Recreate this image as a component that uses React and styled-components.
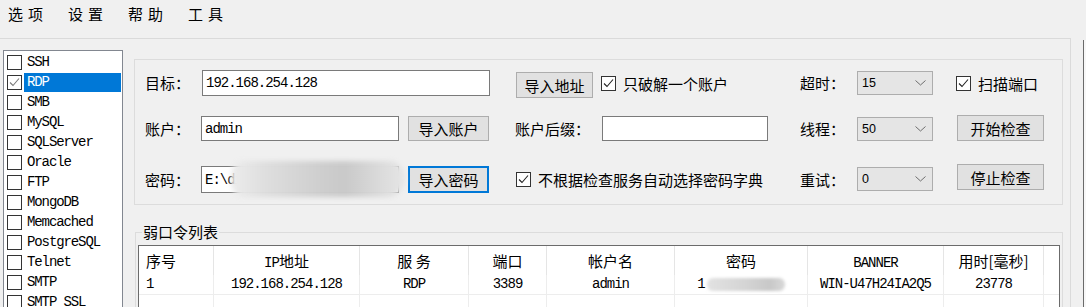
import React from 'react';
import styled, { createGlobalStyle, css } from 'styled-components';

const cjk = `"Noto Sans CJK SC", "Microsoft YaHei", sans-serif`;
const mono = `"Liberation Mono", "Noto Sans CJK SC", monospace`;

const Global = createGlobalStyle`
  html, body { margin: 0; padding: 0; background: #f0f0f0; }
  body { font-family: ${cjk}; font-size: 15px; color: #000; }
  * { box-sizing: border-box; }
`;

const Window = styled.div`
  width: 1086px;
  height: 307px;
  overflow: hidden;
  background: #f0f0f0;
  display: flex;
  flex-direction: column;
`;

const MenuBar = styled.div`
  display: flex;
  height: 30px;
  padding-left: 8px;
  flex: none;
`;

const MenuItem = styled.div`
  width: 60px;
  height: 28px;
  line-height: 28px;
  font-size: 15px;
  letter-spacing: 5px;
`;

const Body = styled.div`
  display: flex;
  margin-top: 8px;
  flex: 1;
  min-height: 0;
`;

const Panel = styled.div`
  width: 1071px;
  flex: none;
  border-top: 1px solid #dadada;
  border-right: 1px solid #dadada;
  display: flex;
  align-items: flex-start;
  padding: 11px 0 0 3px;
`;

const EdgeLine = styled.div`
  width: 1px;
  margin-left: 12px;
  margin-top: 2px;
  background: #6a6a6a;
  flex: none;
`;

const EdgeStrip = styled.div`
  flex: 1;
  margin-top: 2px;
  background: #f7f7f7;
`;

/* ---------- service list ---------- */
const ListBox = styled.div`
  width: 120px;
  height: 280px;
  flex: none;
  background: #fff;
  border: 1px solid #828790;
  padding-top: 1px;
`;

const ListItem = styled.div`
  height: 20px;
  display: flex;
  align-items: center;
`;

const ListLabel = styled.div`
  flex: 1;
  height: 19px;
  align-self: flex-end;
  margin: 0 1px 0 2px;
  padding-left: 3px;
  font-family: ${mono};
  font-size: 14px;
  letter-spacing: -1.1px;
  line-height: 18px;
  white-space: nowrap;
  background: ${p => (p.$selected ? '#0078d7' : 'transparent')};
  color: ${p => (p.$selected ? '#fff' : '#000')};
`;

const Box = styled.span`
  width: 15px;
  height: 15px;
  flex: none;
  border: 1px solid #333;
  background: #fff;
  display: inline-flex;
  align-items: center;
  justify-content: center;
  margin-left: ${p => p.$ml || 0}px;
`;

const Check = ({ checked, color = '#222', ml }) => (
  <Box $ml={ml}>
    {checked && (
      <svg width="13" height="13" viewBox="0 0 13 13">
        <polyline points="2,6.5 5,9.5 11,2.5" fill="none" stroke={color} strokeWidth="1.1" />
      </svg>
    )}
  </Box>
);

/* ---------- right column ---------- */
const RightCol = styled.div`
  width: 929px;
  margin-left: 11px;
  margin-top: 9px;
  flex: none;
  display: flex;
  flex-direction: column;
`;

const GroupBox = styled.div`
  border: 1px solid #dcdcdc;
  padding: 10px 0 11px 10px;
`;

const FormGrid = styled.div`
  display: grid;
  grid-template-columns: 56px 198px 9px 82px 25px 87px 166px 32px 57px 76px 23px 88px;
  grid-template-rows: 26px 20px 25px 25px 27px;
  align-items: center;
`;

const place = css`
  grid-column: ${p => p.$col};
  grid-row: ${p => p.$row};
`;

const Label = styled.div`
  ${place};
  font-size: 15px;
  line-height: 20px;
  white-space: nowrap;
  justify-self: start;
`;

const TextBox = styled.div`
  ${place};
  position: relative;
  align-self: stretch;
  margin-left: ${p => p.$ml || 0}px;
  background: #fff;
  border: 1px solid #7a7a7a;
  padding-left: 3px;
  display: flex;
  align-items: center;
  font-family: ${mono};
  font-size: 14px;
  letter-spacing: -1px;
  white-space: nowrap;
  overflow: visible;
`;

const Smear = styled.div`
  position: absolute;
  left: 29px;
  top: -6px;
  width: 174px;
  height: 36px;
  border-radius: 14px 16px 18px 14px;
  background: linear-gradient(90deg, #ececec 0%, #dedede 20%, #cfcfcf 50%, #c9c9c9 65%, #dadada 85%, #e6e6e6 100%);
  filter: blur(2.5px);
`;

const Button = styled.div`
  ${place};
  align-self: start;
  justify-self: start;
  width: ${p => p.$w}px;
  height: ${p => p.$h}px;
  margin-top: ${p => p.$mt || 0}px;
  margin-left: ${p => p.$ml || 0}px;
  background: #e1e1e1;
  border: 1px solid ${p => (p.$focus ? '#0078d7' : '#adadad')};
  box-shadow: ${p => (p.$focus ? 'inset 0 0 0 1px #0078d7' : 'none')};
  display: flex;
  align-items: center;
  justify-content: center;
  font-size: 15px;
  white-space: nowrap;
`;

const Select = styled.div`
  ${place};
  align-self: start;
  margin-top: 1px;
  height: 24px;
  background: #e5e5e5;
  border: 1px solid #adadad;
  display: flex;
  align-items: center;
  justify-content: space-between;
  padding: 0 6px 0 4px;
  font-family: "Liberation Sans", Arial, sans-serif;
  font-size: 12.5px;
`;

const CheckField = styled.div`
  ${place};
  justify-self: start;
  margin-left: ${p => p.$ml || 0}px;
  display: inline-flex;
  align-items: center;
  gap: 7px;
  font-size: 15px;
  white-space: nowrap;
`;

const Chevron = () => (
  <svg width="11" height="6" viewBox="0 0 11 6">
    <polyline points="0.5,0.5 5.5,5 10.5,0.5" fill="none" stroke="#6d6d6d" strokeWidth="1" />
  </svg>
);

/* ---------- result table ---------- */
const Fieldset = styled.fieldset`
  margin: 17px 0 0 1px;
  padding: 3px 2px 0 2px;
  min-width: 0;
  border: 1px solid #dcdcdc;
`;

const Legend = styled.legend`
  margin-left: 4px;
  padding: 0 1px;
  font-size: 15px;
  line-height: 20px;
`;

const Table = styled.div`
  height: 90px;
  background: #fff;
  border: 1px solid #6b6b6b;
`;

const cols = '75px 146px 109px 78px 128px 133px 136px 100px 1fr';

const HeaderRow = styled.div`
  display: grid;
  grid-template-columns: ${cols};
  height: 29px;
`;

const HeadCell = styled.div`
  border-right: ${p => (p.$last ? 'none' : '1px solid #e5e5e5')};
  text-align: ${p => (p.$left ? 'left' : 'center')};
  padding-left: ${p => (p.$left ? '7px' : '0')};
  font-size: 15px;
  line-height: 29px;
  white-space: nowrap;
`;

const Mono = styled.span`
  font-family: ${mono};
  font-size: 14px;
  letter-spacing: -1px;
`;

const DataRow = styled.div`
  display: grid;
  grid-template-columns: ${cols};
  height: 20px;
`;

const DataCell = styled.div`
  border-right: ${p => (p.$last ? 'none' : '1px solid #ededed')};
  border-bottom: 1px solid #ededed;
  text-align: ${p => (p.$left ? 'left' : 'center')};
  padding-left: ${p => (p.$left ? '7px' : '0')};
  font-family: ${mono};
  font-size: 14px;
  letter-spacing: -1px;
  line-height: 19px;
  white-space: nowrap;
`;

const Blot = styled.span`
  display: inline-block;
  width: 78px;
  height: 13px;
  vertical-align: middle;
  margin-left: 2px;
  border-radius: 6px;
  background: linear-gradient(90deg, #e2e2e2, #d4d4d4 50%, #c8c8c8 80%, #d8d8d8);
  filter: blur(1.5px);
`;

const services = ['SSH', 'RDP', 'SMB', 'MySQL', 'SQLServer', 'Oracle', 'FTP', 'MongoDB', 'Memcached', 'PostgreSQL', 'Telnet', 'SMTP', 'SMTP_SSL', 'POP3'];

export default function App() {
  return (
    <>
      <Global />
      <Window>
        <MenuBar>
          <MenuItem>选项</MenuItem>
          <MenuItem>设置</MenuItem>
          <MenuItem>帮助</MenuItem>
          <MenuItem>工具</MenuItem>
        </MenuBar>
        <Body>
          <Panel>
            <ListBox>
              {services.map(s => (
                <ListItem key={s}>
                  <Check checked={s === 'RDP'} color="#7a7a7a" ml={3} />
                  <ListLabel $selected={s === 'RDP'}>{s}</ListLabel>
                </ListItem>
              ))}
            </ListBox>
            <RightCol>
              <GroupBox>
                <FormGrid>
                  <Label $col="1" $row="1">目标：</Label>
                  <TextBox $col="2 / 5" $row="1" $ml={1}>192.168.254.128</TextBox>
                  <Button $col="6" $row="1" $w={77} $h={26} $mt={2} $ml={1}>导入地址</Button>
                  <CheckField $col="7 / 9" $row="1" $ml={-1}>
                    <Check checked />只破解一个账户
                  </CheckField>
                  <Label $col="9" $row="1">超时：</Label>
                  <Select $col="10" $row="1">15<Chevron /></Select>
                  <CheckField $col="12" $row="1">
                    <Check checked />扫描端口
                  </CheckField>

                  <Label $col="1" $row="3">账户：</Label>
                  <TextBox $col="2" $row="3">admin</TextBox>
                  <Button $col="4" $row="3" $w={81} $h={25}>导入账户</Button>
                  <Label $col="6" $row="3">账户后缀：</Label>
                  <TextBox $col="7" $row="3"></TextBox>
                  <Label $col="9" $row="3">线程：</Label>
                  <Select $col="10" $row="3">50<Chevron /></Select>
                  <Button $col="12" $row="3" $w={87} $h={26} $mt={-1} $ml={1}>开始检查</Button>

                  <Label $col="1" $row="5">密码：</Label>
                  <TextBox $col="2" $row="5">
                    E:\dict\top1000.txt
                    <Smear />
                  </TextBox>
                  <Button $col="4" $row="5" $w={81} $h={27} $focus>导入密码</Button>
                  <CheckField $col="6 / 10" $row="5" $ml={1}>
                    <Check checked />不根据检查服务自动选择密码字典
                  </CheckField>
                  <Label $col="9" $row="5">重试：</Label>
                  <Select $col="10" $row="5">0<Chevron /></Select>
                  <Button $col="12" $row="5" $w={87} $h={26} $mt={-2} $ml={1}>停止检查</Button>
                </FormGrid>
              </GroupBox>
              <Fieldset>
                <Legend>弱口令列表</Legend>
                <Table>
                  <HeaderRow>
                    <HeadCell $left>序号</HeadCell>
                    <HeadCell><Mono>IP</Mono>地址</HeadCell>
                    <HeadCell>服 务</HeadCell>
                    <HeadCell>端口</HeadCell>
                    <HeadCell>帐户名</HeadCell>
                    <HeadCell>密码</HeadCell>
                    <HeadCell><Mono>BANNER</Mono></HeadCell>
                    <HeadCell>用时[毫秒]</HeadCell>
                    <HeadCell $last />
                  </HeaderRow>
                  <DataRow>
                    <DataCell $left>1</DataCell>
                    <DataCell>192.168.254.128</DataCell>
                    <DataCell>RDP</DataCell>
                    <DataCell>3389</DataCell>
                    <DataCell>admin</DataCell>
                    <DataCell>1<Blot /></DataCell>
                    <DataCell>WIN-U47H24IA2Q5</DataCell>
                    <DataCell>23778</DataCell>
                    <DataCell $last />
                  </DataRow>
                  <DataRow>
                    <DataCell $left />
                    <DataCell />
                    <DataCell />
                    <DataCell />
                    <DataCell />
                    <DataCell />
                    <DataCell />
                    <DataCell />
                    <DataCell $last />
                  </DataRow>
                </Table>
              </Fieldset>
            </RightCol>
          </Panel>
          <EdgeLine />
          <EdgeStrip />
        </Body>
      </Window>
    </>
  );
}
